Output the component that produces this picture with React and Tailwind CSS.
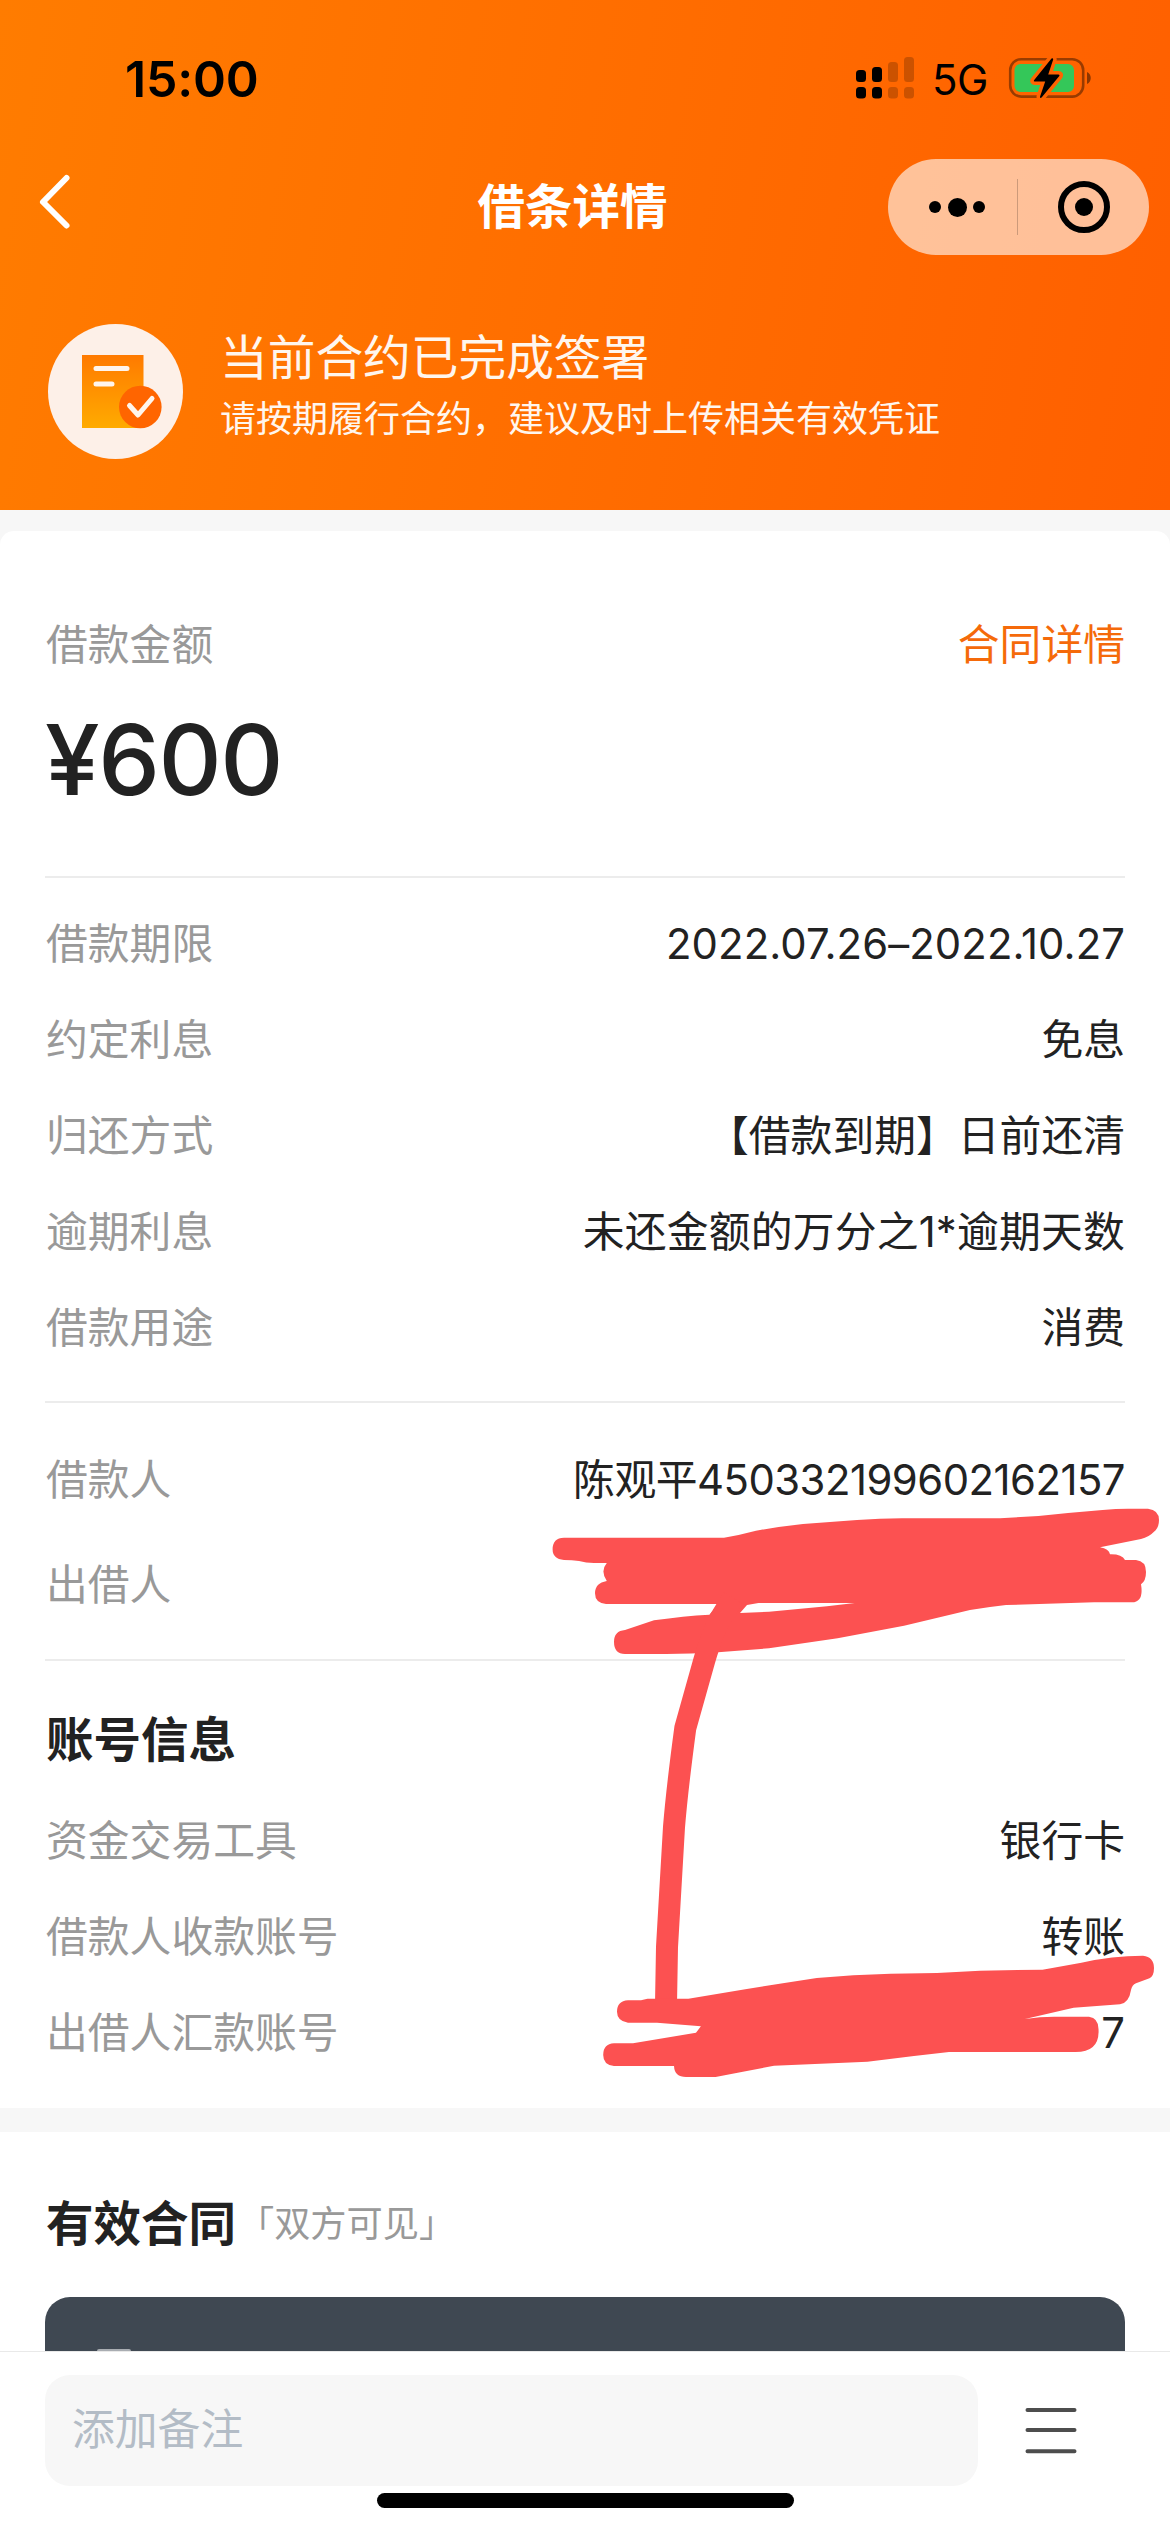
import React from 'react';

const loanRows = [
  { label: '借款期限', value: '2022.07.26–2022.10.27', tracking: 'tracking-[0.1px]' },
  { label: '约定利息', value: '免息' },
  { label: '归还方式', value: '【借款到期】日前还清' },
  { label: '逾期利息', value: '未还金额的万分之1*逾期天数', tracking: 'tracking-[0.2px]' },
  { label: '借款用途', value: '消费' },
];

const partyRows = [
  { label: '借款人', value: '陈观平450332199602162157', tracking: 'tracking-[-0.5px]' },
  { label: '出借人', value: '' },
];

const accountRows = [
  { label: '资金交易工具', value: '银行卡' },
  { label: '借款人收款账号', value: '转账' },
  { label: '出借人汇款账号', value: '7' },
];

// Status bar
const StatusBar = () => (
  <div className="flex h-[156px] items-center justify-between pl-[125px] pr-[78px] text-black">
    <span className="pt-px text-[50px] leading-none font-semibold tracking-[-0.2px]">15:00</span>
    <div className="flex items-center">
      <svg width="60" height="44" viewBox="855 56 60 44">
        <rect x="856" y="70" width="10" height="12" rx="3.5" />
        <rect x="872" y="67" width="10" height="15" rx="3.5" />
        <rect x="856" y="87" width="10" height="11.5" rx="3.5" />
        <rect x="872" y="87" width="10" height="11.5" rx="3.5" />
        <g opacity="0.2">
          <rect x="888" y="62" width="10" height="20" rx="3.5" />
          <rect x="904" y="57" width="10" height="25" rx="3.5" />
          <rect x="888" y="87" width="10" height="11.5" rx="3.5" />
          <rect x="904" y="87" width="10" height="11.5" rx="3.5" />
        </g>
      </svg>
      <span className="ml-[17px] w-[58px] pt-[3px] text-[42px] leading-none tracking-[-0.5px] whitespace-nowrap">5G</span>
      <svg className="ml-[17px]" width="85" height="44" viewBox="1007 56 85 44">
        <rect x="1010.2" y="59.2" width="73" height="37.4" rx="11" fill="none" stroke="#000" strokeOpacity="0.4" strokeWidth="2.6" />
        <path d="M1087 72c5 2 5 10 0 12z" opacity="0.45" />
        <rect x="1014.5" y="64" width="59.5" height="28" rx="6" fill="#34c759" />
        <path
          d="M1051.5 58.5 1034 80.2q-.8 1.3.8 1.3h10.4l-5.2 15.2q0 2 1.8.6L1059.3 76q.8-1.6-.9-1.6h-10.2l5-15q-.2-1.8-1.7-.9z"
          stroke="#ff6300"
          strokeWidth="7"
          paintOrder="stroke"
          strokeLinejoin="round"
        />
      </svg>
    </div>
  </div>
);

// Navigation bar with the mini program capsule
const NavBar = () => (
  <div className="grid h-[102px] grid-cols-[282px_1fr_282px] items-center pr-[21px]">
    <svg className="ml-[36px] -mt-[10px]" width="38" height="60" viewBox="0 0 38 60">
      <path d="M30.5 6 7 30l23.5 23.5" fill="none" stroke="#fff" strokeWidth="6" strokeLinecap="round" strokeLinejoin="round" />
    </svg>
    <h1 className="pr-[4px] text-center text-[47.5px] leading-none font-bold text-white">借条详情</h1>
    <div className="flex h-[96px] w-[261px] items-center justify-self-end rounded-full bg-white/60">
      <div className="flex w-[129px] items-center justify-end gap-[6.5px] pr-[32px]">
        <span className="size-[12px] rounded-full bg-black" />
        <span className="size-[19px] rounded-full bg-black" />
        <span className="size-[12px] rounded-full bg-black" />
      </div>
      <span className="h-[56px] w-px bg-black/20" />
      <div className="flex flex-1 items-center justify-center">
        <span className="flex size-[52px] items-center justify-center rounded-full border-[6.5px] border-black">
          <span className="size-[18px] rounded-full bg-black" />
        </span>
      </div>
    </div>
  </div>
);

const ContractIcon = () => (
  <svg width="135" height="135" viewBox="0 0 135 135">
    <defs>
      <linearGradient id="doc" x1="0" y1="0" x2="0" y2="1">
        <stop offset="0" stopColor="#ff7a00" />
        <stop offset="1" stopColor="#ffab00" />
      </linearGradient>
    </defs>
    <circle cx="67.5" cy="67.5" r="67.5" fill="#fdf0e8" />
    <path d="M34 31h61.5v73H34z" fill="url(#doc)" />
    <path d="M48 44.6h31M48 60h16" stroke="#fff5ec" strokeWidth="5" strokeLinecap="round" />
    <circle cx="92.3" cy="83" r="21.3" fill="#ff6500" />
    <path d="m81.5 81.5 8.500 9.500 14-16.500" fill="none" stroke="#fff5ec" strokeWidth="5" strokeLinecap="round" strokeLinejoin="round" />
  </svg>
);

const Divider = ({ className = '' }) => <div className={`h-[2px] bg-[#ececec] ${className}`} />;

const Row = ({ label, value, tracking = '', height = 'h-[96px]' }) => (
  <div className={`flex items-center justify-between pt-[2px] ${height}`}>
    <span className="pl-px text-[#999999]">{label}</span>
    <span className={`text-[#222222] ${tracking}`}>{value}</span>
  </div>
);

// Red marker strokes drawn over the private fields
const MarkerStrokes = () => (
  <svg className="pointer-events-none absolute top-0 left-0" width="1170" height="2532" viewBox="0 0 1170 2532" fill="#fc5151">
    <path
      fillRule="evenodd"
      d="M564 1537.7H724Q740 1535 756 1530.7Q780 1526.5 803 1524L857 1520Q880 1518.5 902 1518.3H1000L1038.5 1516L1068 1513L1102.6 1510Q1116 1508.7 1128 1508.7H1148Q1159 1510 1159 1520Q1159 1528 1154 1531.7Q1149 1537 1141 1539L1100 1547.3Q1109 1549 1110 1554.3Q1122 1554 1125 1560H1136Q1146 1561 1146 1572Q1146 1581 1141 1584.3Q1144 1602 1132 1602.3H1094L1006 1605Q988 1607 970 1610L904 1625.7L837.6 1638.3L769 1648.3L718 1652.3Q690 1654 666 1654H625Q614 1654 614 1641.7Q614 1631 625 1630L654 1620.3Q684 1616 709.4 1614.7L718 1604H606Q595 1603 595 1593.3Q595 1583 606.8 1581Q600 1571 606.8 1563H594Q586 1563 579 1561Q572 1560 564 1560Q552.6 1559 552.6 1549.3Q552.6 1538 564 1537.7Z
        M758.5 1603H854.7L827 1606.3L769 1611.7L740 1613L747 1605Z"
    />
    <path
      d="M733 1598 722 1616Q714 1628 704.4 1660L685.3 1728Q677 1790 674 1827L670.5 1887L667 1947L666 2004"
      fill="none"
      stroke="#fc5151"
      strokeWidth="22"
      strokeLinejoin="round"
    />
    <path d="M628 2000.3H641L647.5 1998.7H688.4L746.8 1989L778 1984L816.8 1978Q853 1974.5 890.7 1973.7L937 1973L980 1970.7L1042.5 1969.7L1081.4 1962.7Q1112 1955.7 1143 1955.7Q1154 1957 1154 1968Q1154 1976 1149.5 1978.3L1136 1983.3Q1132 1985 1131 1990Q1129 2003 1120 2004.3L1073.6 2007.7L1025 2019Q1040 2016.7 1054 2016.7H1089Q1098.5 2018 1098.5 2029Q1100 2052 1075.6 2052H949L914 2056L867.4 2061.7L809 2064.3L774 2065.7L742.9 2071.7L715.6 2077H686Q674.5 2077 674 2066H614Q603.2 2065 603.2 2055Q603.2 2044 614 2043.3H633L696 2032.7L700.9 2026.3L657 2022.7H628Q617 2021 617 2011.7Q617 2001 628 2000.3Z" />
  </svg>
);

// Bottom bar with the note input
const BottomBar = () => (
  <div className="relative h-[181px] border-t border-[#e9e9e9] bg-white pt-[23px] pl-[45px]">
    <div className="flex items-center">
      <div className="flex h-[111px] w-[933px] items-center rounded-[25px] bg-[#f7f7f7] pl-[27px] text-[42.8px] text-[#b3bcc6]">
        添加备注
      </div>
      <svg className="-mt-[2px] ml-[47px]" width="52" height="48" viewBox="0 0 52 48">
        <path d="M2.5 4h47M2.5 24h47M2.5 45.3h47" stroke="#4d4d4d" strokeWidth="4" strokeLinecap="round" />
      </svg>
    </div>
    <div className="absolute bottom-[24px] left-[377px] h-[15px] w-[417px] rounded-full bg-black" />
  </div>
);

export default function App() {
  return (
    <div className="relative flex h-[2532px] w-[1170px] flex-col overflow-hidden bg-[#f7f7f7] font-['Inter','Noto_Sans_CJK_SC',sans-serif] text-[41.8px] leading-none">
      <header className="h-[510px] shrink-0 bg-[linear-gradient(100deg,#ff7c00,#ff5f00)]">
        <StatusBar />
        <NavBar />
        <div className="flex items-start gap-[37px] pt-[66px] pl-[48px]">
          <ContractIcon />
          <div className="mt-[3px] text-[#fff6ee]">
            <p className="text-[47.7px] leading-[62px]">当前合约已完成签署</p>
            <p className="text-[36px] leading-[60px]">请按期履行合约，建议及时上传相关有效凭证</p>
          </div>
        </div>
      </header>

      <section className="mt-[21px] h-[1577px] shrink-0 rounded-t-[14px] bg-white px-[45px] pt-[84px]">
        <div className="flex h-[60px] items-center justify-between pt-[2px]">
          <span className="pl-px text-[#999999]">借款金额</span>
          <span className="text-[#f56a0a]">合同详情</span>
        </div>
        <p className="mt-[30px] text-[98px] leading-[110px] font-medium tracking-[-1.4px] text-[#222222]">¥600</p>

        <Divider className="mt-[61px] mb-[18px]" />
        {loanRows.map((row) => (
          <Row key={row.label} {...row} />
        ))}

        <Divider className="mt-[25px] mb-[24px]" />
        {partyRows.map((row) => (
          <Row key={row.label} {...row} height="h-[105px]" />
        ))}

        <Divider className="mt-[22px] mb-[49px]" />
        <h2 className="mb-[23px] pl-px text-[47.5px] leading-[60px] font-bold text-[#222222]">账号信息</h2>
        {accountRows.map((row) => (
          <Row key={row.label} {...row} />
        ))}
      </section>

      <section className="mt-[24px] flex flex-1 flex-col bg-white px-[45px] pt-[61px]">
        <div className="flex h-[60px] items-center gap-[2px] pt-[2px] pl-px">
          <h2 className="text-[47.5px] font-bold text-[#222222]">有效合同</h2>
          <span className="text-[36.2px] text-[#999999]">「双方可见」</span>
        </div>
        <div className="mt-[44px] flex flex-1 items-end rounded-t-[25px] bg-[#3f4852] pl-[52px]">
          <span className="h-[2px] w-[34px] rounded-t-[2px] bg-[#a9adb2]" />
        </div>
      </section>

      <BottomBar />
      <MarkerStrokes />
    </div>
  );
}
